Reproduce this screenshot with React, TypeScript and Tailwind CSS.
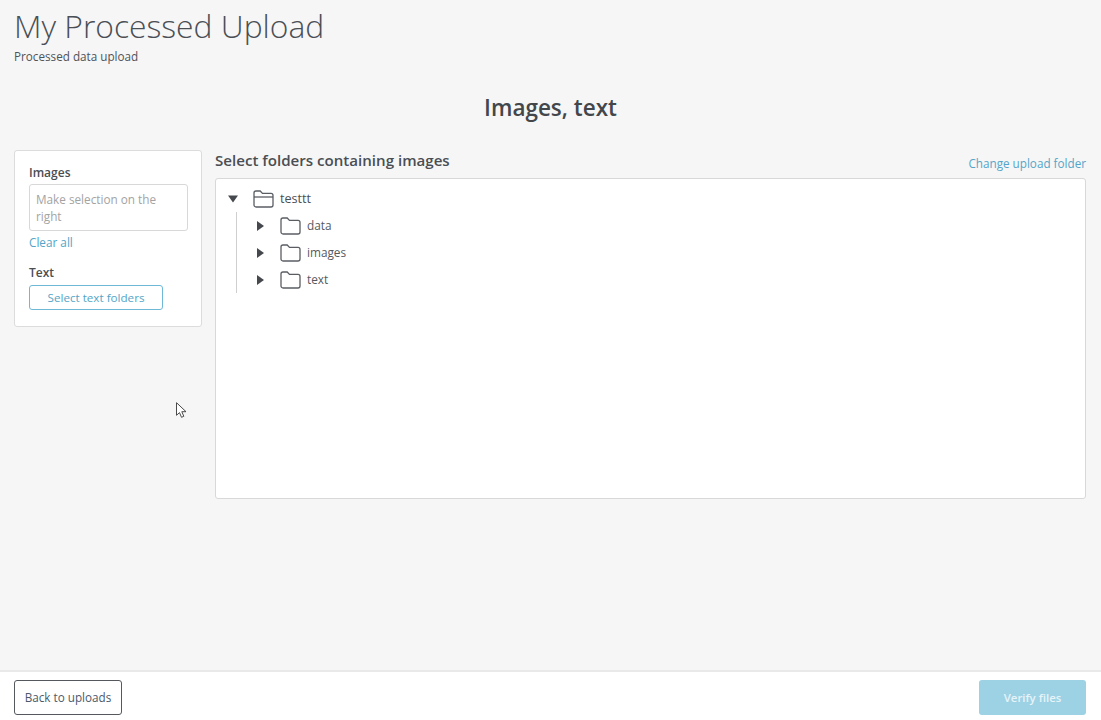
import React from "react";

const font = { fontFamily: '"Open Sans", "Liberation Sans", sans-serif' };

function Caret({ open }: { open?: boolean }) {
  return (
    <svg width="10" height="10" viewBox="0 0 10 10" className="shrink-0">
      {open ? <path d="M0 1.5h10L5 8.5z" fill="#45494e" /> : <path d="M1 0v10L8 5z" fill="#45494e" />}
    </svg>
  );
}

function Folder({ open }: { open?: boolean }) {
  return (
    <svg width="21" height="18" viewBox="0 0 21 18" fill="none" stroke="#5a5e63" strokeWidth="1.3" className="shrink-0">
      <path d="M1 15V3a2 2 0 0 1 2-2h4.2l2.3 2.4H18a2 2 0 0 1 2 2V15a2 2 0 0 1-2 2H3a2 2 0 0 1-2-2z" />
      {open && <path d="M1 7h19" />}
    </svg>
  );
}

function Child({ name }: { name: string }) {
  return (
    <div className="flex items-center h-[27px]">
      <Caret />
      <div className="w-[14px]" />
      <Folder />
      <span className="ml-[6px] text-[11.8px] text-[#55595e]">{name}</span>
    </div>
  );
}

export default function App() {
  return (
    <div className="relative h-[720px] w-[1101px] flex flex-col overflow-hidden bg-[#f6f6f7] text-[#45494e]" style={font}>
      <div className="flex-1 min-h-0 px-[14px]">
        <h1 className="pt-[4px] text-[31.8px] leading-[44px] font-light text-[#4a4f55]">My Processed Upload</h1>
        <p className="text-[11.7px] leading-[14px] mt-[1px] text-[#4f5358]">Processed data upload</p>
        <h2 className="mt-[24px] h-[42px] text-center text-[22.5px] leading-[42px] font-semibold text-[#43474c]">Images, text</h2>
        <div className="mt-[21px] flex gap-[13px] w-[1072px]">
          <div className="w-[188px] h-[177px] shrink-0 bg-white border border-[#dcdcdc] rounded-[3px] pl-[14px] pr-[13px] pt-[14px]">
            <div className="text-[12px] leading-[16px] font-semibold text-[#4a4e53]">Images</div>
            <div className="mt-[3px] h-[47px] border border-[#d8d8d8] rounded-[3px] pl-[6px] pr-[8px] pt-[6px] text-[11.75px] leading-[17px] text-[#a3a3a3]">
              Make selection on the right
            </div>
            <div className="mt-[3px] text-[11.75px] leading-[16px] text-[#54a5c7]">Clear all</div>
            <div className="mt-[15px] text-[12px] leading-[16px] font-semibold text-[#4a4e53]">Text</div>
            <button className="mt-[4px] block h-[25px] w-[134px] border border-[#6fb9d6] rounded-[3px] text-center text-[11.65px] leading-[21px] text-[#54a5c7]">
              Select text folders
            </button>
          </div>
          <div className="flex-1 min-w-0">
            <div className="flex justify-between h-[28px]">
              <span className="text-[15.1px] leading-[20px] font-semibold text-[#4a4e53]">Select folders containing images</span>
              <a className="pt-[5px] text-[11.7px] leading-[16px] text-[#54a5c7]">Change upload folder</a>
            </div>
            <div className="h-[321px] bg-white border border-[#d8d8d8] rounded-[3px] pl-[12px] pt-[7px]">
              <div className="flex items-center h-[26px]">
                <Caret open />
                <div className="w-[15px]" />
                <Folder open />
                <span className="ml-[6px] text-[12.6px] font-medium text-[#4a4e53]">testtt</span>
              </div>
              <div className="ml-[8px] h-[81px] border-l border-[#cfcfcf] pl-[19px]">
                <Child name="data" />
                <Child name="images" />
                <Child name="text" />
              </div>
            </div>
          </div>
        </div>
      </div>
      <div className="h-[50px] shrink-0 bg-white border-t-2 border-[#e9e9e9] flex items-start justify-between pl-[14px] pr-[15px] pt-[8px]">
        <button className="h-[35px] w-[108px] border border-[#55595e] rounded-[3px] text-[11.7px] text-[#4a5a6b]">Back to uploads</button>
        <button className="h-[35px] w-[107px] bg-[#9dd1e4] rounded-[3px] text-[11.4px] font-semibold text-[#e6f4f9]">Verify files</button>
      </div>
      <svg width="12" height="18" viewBox="0 0 12 18" className="absolute left-[176px] top-[402px]">
        <path d="M0.5 0.7v12.6l3-2.7 2 4.7 2.3-1-2-4.6h4.2z" fill="#fff" stroke="#4a4a4a" strokeWidth="1" />
      </svg>
    </div>
  );
}
